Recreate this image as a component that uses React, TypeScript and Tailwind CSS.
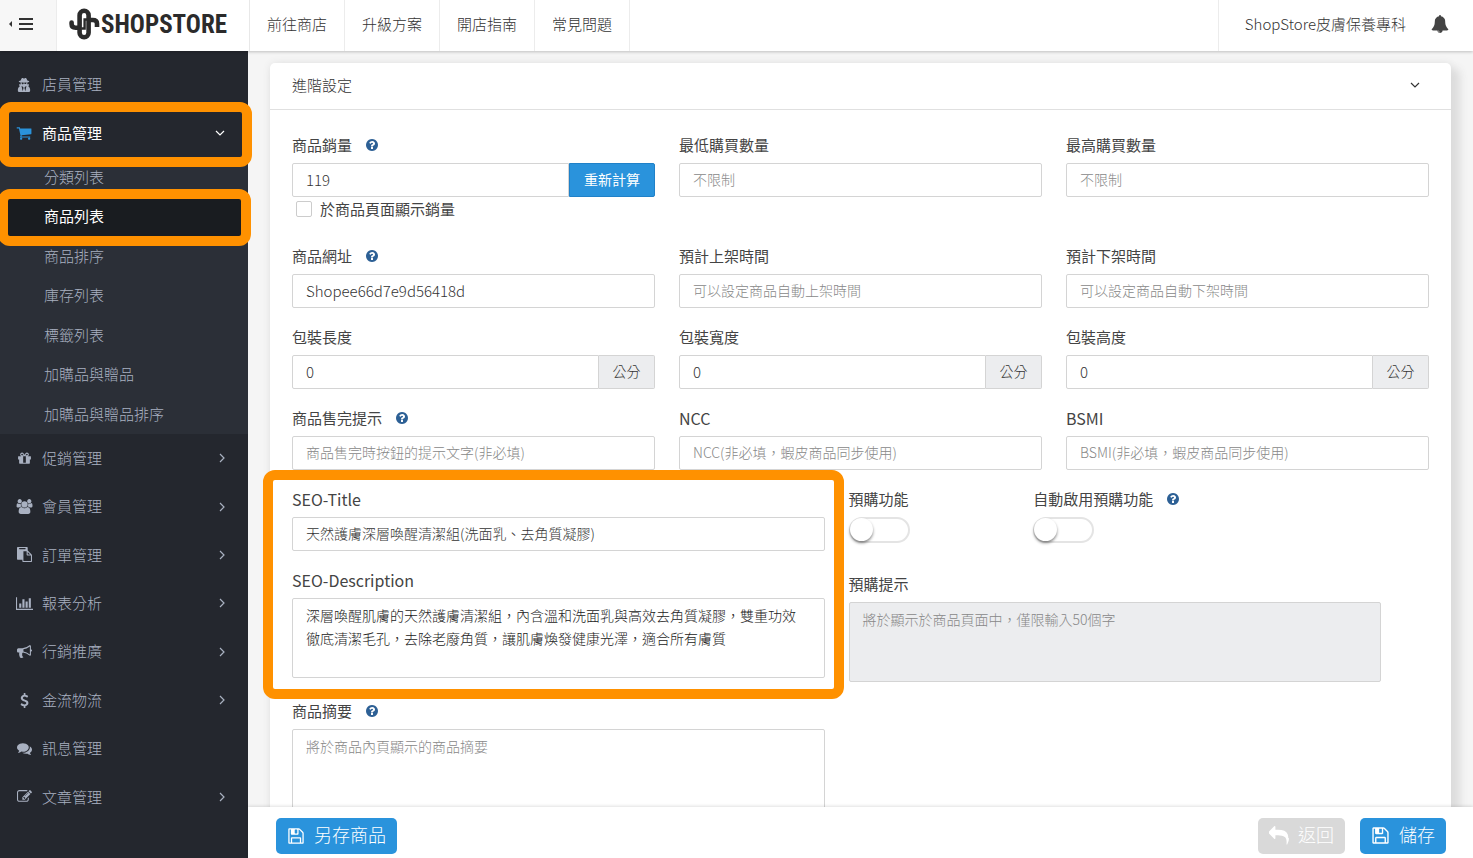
import React, { useId } from "react";
import { FaUserSecret } from "react-icons/fa";

type IconProps = { d: string; className?: string; wide?: boolean };

function Glyph({ d, className = "h-[14px] w-[14px]", wide = false }: IconProps) {
  return (
    <svg viewBox={wide ? "0 0 2048 1792" : "0 0 1792 1792"} fill="currentColor" aria-hidden="true" className={className}>
      <path d={d} />
    </svg>
  );
}

const icons = {
  cart: "M704 1536q0 52-38 90t-90 38-90-38-38-90 38-90 90-38 90 38 38 90zm896 0q0 52-38 90t-90 38-90-38-38-90 38-90 90-38 90 38 38 90zm128-1088v512q0 24-16.5 42.5t-40.5 21.5l-1044 122q13 60 13 70 0 16-24 64h920q26 0 45 19t19 45-19 45-45 19h-1024q-26 0-45-19t-19-45q0-11 8-31.5t16-36 21.5-40 15.5-29.5l-177-823h-204q-26 0-45-19t-19-45 19-45 45-19h256q16 0 28.5 6.5t19.5 15.5 13 24.5 8 26 5.5 29.5 4.5 26h1201q26 0 45 19t19 45z",
  gift: "M1056 1356v-716h-320v716q0 25 18 38.5t46 13.5h192q28 0 46-13.5t18-38.5zm-456-844h195l-126-161q-26-31-69-31-40 0-68 28t-28 68 28 68 68 28zm688-96q0-40-28-68t-68-28q-43 0-69 31l-125 161h194q40 0 68-28t28-68zm376 256v320q0 14-9 23t-23 9h-96v416q0 40-28 68t-68 28h-1088q-40 0-68-28t-28-68v-416h-96q-14 0-23-9t-9-23v-320q0-14 9-23t23-9h440q-93 0-158.5-65.5t-65.5-158.5 65.5-158.5 158.5-65.5q107 0 168 77l128 165 128-165q61-77 168-77 93 0 158.5 65.5t65.5 158.5-65.5 158.5-158.5 65.5h440q14 0 23 9t9 23z",
  users: "M657 896q-162 5-265 128h-134q-82 0-138-40.5t-56-118.5q0-353 124-353 6 0 43.5 21t97.5 42.5 119 21.5q67 0 133-23-5 37-5 66 0 159 90 287zm1071 637q0 120-73 189.5t-194 69.5h-874q-121 0-194-69.5t-73-189.5q0-53 3.5-103.5t14-109 26.5-108.5 43-97.5 62-81 85.5-53.5 111.5-20q10 0 43 21.5t73 48 107 48 135 21.5 135-21.5 107-48 73-48 43-21.5q61 0 111.5 20t85.5 53.5 62 81 43 97.5 26.5 108.5 14 109 3.5 103.5zm-1024-1277q0 106-75 181t-181 75-181-75-75-181 75-181 181-75 181 75 75 181zm704 384q0 159-112.5 271.5t-271.5 112.5-271.5-112.5-112.5-271.5 112.5-271.5 271.5-112.5 271.5 112.5 112.5 271.5zm576 225q0 78-56 118.5t-138 40.5h-134q-103-123-265-128 90-128 90-287 0-29-5-66 66 23 133 23 59 0 119-21.5t97.5-42.5 43.5-21q124 0 124 353zm-128-609q0 106-75 181t-181 75-181-75-75-181 75-181 181-75 181 75 75 181z",
  paste: "M768 1664h896v-640h-416q-40 0-68-28t-28-68v-416h-384v1152zm256-1440v-64q0-13-9.5-22.5t-22.5-9.5h-704q-13 0-22.5 9.5t-9.5 22.5v64q0 13 9.5 22.5t22.5 9.5h704q13 0 22.5-9.5t9.5-22.5zm256 672h299l-299-299v299zm512 128v672q0 40-28 68t-68 28h-960q-40 0-68-28t-28-68v-160h-544q-40 0-68-28t-28-68v-1344q0-40 28-68t68-28h1088q40 0 68 28t28 68v328q21 13 36 28l408 408q28 28 48 76t20 88z",
  chart: "M640 896v512h-256v-512h256zm384-512v1024h-256v-1024h256zm1024 1152v128h-2048v-1536h128v1408h1920zm-640-896v768h-256v-768h256zm384-384v1152h-256v-1152h256z",
  horn: "M1664 640q53 0 90.5 37.5t37.5 90.5-37.5 90.5-90.5 37.5v384q0 52-38 90t-90 38q-417-347-812-380-58 19-91 66t-31 100.5 40 92.5q-20 33-23 65.5t6 58 33.5 55 48 50 61.5 50.5q-29 58-111.5 83t-168.5 11.5-132-55.5q-7-23-29.5-87.5t-32-94.5-23-89-15-101 3.5-98.5 22-110.5h-122q-66 0-113-47t-47-113v-192q0-66 47-113t113-47h480q435 0 896-384 52 0 90 38t38 90v384zm-128 604v-954q-394 302-768 343v270q377 42 768 341z",
  dollar: "M1362 1185q0 153-99.5 263.5t-258.5 136.5v175q0 14-9 23t-23 9h-135q-13 0-22.5-9.5t-9.5-22.5v-175q-66-9-127.5-31t-101.5-44.5-74-48-46.5-37.5-17.5-18q-17-21-2-41l103-135q7-10 23-12 15-2 24 9l2 2q113 99 243 125 37 8 74 8 81 0 142.5-43t61.5-122q0-28-15-53t-33.5-42-58.5-37.5-66-32-80-32.5q-39-16-61.5-25t-61.5-26.5-62.5-31-56.5-35.5-53.5-42.5-43.5-49-35.5-58-21-66.5-8.5-78q0-138 98-242t255-134v-180q0-13 9.5-22.5t22.5-9.5h135q14 0 23 9t9 23v176q57 6 110.5 23t87 33.5 63.5 37.5 39 29 15 14q17 18 5 38l-81 146q-8 15-23 16-14 3-27-7-3-3-14.5-12t-39-26.5-58.5-32-74.5-26-85.5-11.5q-95 0-155 43t-60 111q0 26 8.5 48t29.5 41.5 39.5 33 56 31 60.5 27 70 27.5q53 20 81 31.5t76 35 75.5 42.5 62 50 53 63.5 31.5 76.5 13 94z",
  comments: "M1408 768q0 139-94 257t-256.5 186.5-353.5 68.5q-86 0-176-16-124 88-278 128-36 9-86 16h-3q-11 0-20.5-8t-11.5-21q-1-3-1-6.5t.5-6.5 2-6l2.5-5 3.5-5.5 4-5 4.5-5 4-4.5q5-6 23-25t26-29.5 22.5-29 25-38.5 20.5-44q-124-72-195-177t-71-224q0-139 94-257t256.5-186.5 353.5-68.5 353.5 68.5 256.5 186.5 94 257zm384 256q0 120-71 224.5t-195 176.5q10 24 20.5 44t25 38.5 22.5 29 26 29.5 23 25q1 1 4 4.5t4.5 5 4 5 3.5 5.5l2.5 5 2 6 .5 6.5-1 6.5q-3 14-13 22t-22 7q-50-7-86-16-154-40-278-128-90 16-176 16-271 0-472-132 58 4 88 4 161 0 309-45t264-129q125-92 192-212t67-254q0-77-23-152 129 71 204 178t75 230z",
  edit: "M888 1184l116-116-152-152-116 116v56h96v96h56zm440-720q-16-16-33 1l-350 350q-17 17-1 33t33-1l350-350q17-17 1-33zm80 594v190q0 119-84.5 203.5t-203.5 84.5h-832q-119 0-203.5-84.5t-84.5-203.5v-832q0-119 84.5-203.5t203.5-84.5h832q63 0 117 25 15 7 18 23 3 17-9 29l-49 49q-14 14-32 8-23-6-45-6h-832q-66 0-113 47t-47 113v832q0 66 47 113t113 47h832q66 0 113-47t47-113v-126q0-13 9-22l64-64q15-15 35-7t20 29zm-96-738l288 288-672 672h-288v-288zm444 132l-92 92-288-288 92-92q28-28 68-28t68 28l152 152q28 28 28 68t-28 68z",
  bell: "M912 1696q0-16-16-16-59 0-101.5-42.5t-42.5-101.5q0-16-16-16t-16 16q0 73 51.5 124.5t124.5 51.5q16 0 16-16zm816-288q0 52-38 90t-90 38h-448q0 106-75 181t-181 75-181-75-75-181h-448q-52 0-90-38t-38-90q50-42 91-88t85-119.5 74.5-158.5 50-206 19.5-260q0-152 117-282.5t307-158.5q-8-19-8-39 0-40 28-68t68-28 68 28 28 68q0 20-8 39 190 28 307 158.5t117 282.5q0 139 19.5 260t50 206 74.5 158.5 85 119.5 91 88z",
  help: "M1024 1376v-192q0-14-9-23t-23-9h-192q-14 0-23 9t-9 23v192q0 14 9 23t23 9h192q14 0 23-9t9-23zm256-672q0-88-55.5-163t-138.5-116-170-41q-243 0-371 213-15 24 8 42l132 100q7 6 19 6 16 0 25-12 53-68 86-92 34-24 86-24 48 0 85.5 26t37.5 59q0 38-20 61t-68 45q-63 28-115.5 86.5t-52.5 125.5v36q0 14 9 23t23 9h192q14 0 23-9t9-23q0-19 21.5-49.5t54.5-49.5q32-18 49-28.5t46-35 44.5-48 28-60.5 12.5-81zm384 192q0 209-103 385.5t-279.5 279.5-385.5 103-385.5-103-279.5-279.5-103-385.5 103-385.5 279.5-279.5 385.5-103 385.5 103 279.5 279.5 103 385.5z",
  save: "M512 1536h768v-384h-768v384zm896 0h128v-896q0-14-10-38.5t-20-34.5l-281-281q-10-10-34-20t-39-10v416q0 40-28 68t-68 28h-576q-40 0-68-28t-28-68v-416h-128v1280h128v-416q0-40 28-68t68-28h832q40 0 68 28t28 68v416zm-384-928v-320q0-13-9.5-22.5t-22.5-9.5h-192q-13 0-22.5 9.5t-9.5 22.5v320q0 13 9.5 22.5t22.5 9.5h192q13 0 22.5-9.5t9.5-22.5zm640 32v928q0 40-28 68t-68 28h-1344q-40 0-68-28t-28-68v-1344q0-40 28-68t68-28h928q40 0 88 20t76 48l280 280q28 28 48 76t20 88z",
  reply: "M1792 1120q0 166-127 451-3 7-10.5 24t-13.5 30-13 22q-12 17-28 17-15 0-23.5-10t-8.5-25q0-9 2.5-26.5t2.5-23.5q5-68 5-123 0-112-19.5-200.5t-54-153.5-89-112-117.5-78-145.5-45-167.5-21.5-188-6.5h-224v256q0 26-19 45t-45 19-45-19l-512-512q-19-19-19-45t19-45l512-512q19-19 45-19t45 19 19 45v256h224q713 0 875 403 53 134 53 333z",
};

function Angle({ down = false, className = "" }: { down?: boolean; className?: string }) {
  return (
    <svg viewBox="0 0 10 10" fill="none" stroke="currentColor" strokeWidth="1.2" aria-hidden="true" className={`h-[10px] w-[10px] ${className}`}>
      <path d={down ? "M1 3l4 4 4-4" : "M3 1l4 4-4 4"} />
    </svg>
  );
}

function Logo() {
  return (
    <a href="#home" className="flex h-full w-[193px] items-center gap-px border-r border-[#e8e8e8] pb-[3px] pl-[12px] text-[#2b2b2b]">
      <svg viewBox="0 0 31 32" fill="none" stroke="currentColor" className="h-[32px] w-[31px] shrink-0" aria-hidden="true">
        <path d="M2.6 14.5v1.6q0 3.6 4 3.6h3" strokeWidth="4.6" strokeLinecap="round" />
        <rect x="10.6" y="2.8" width="9" height="26.4" rx="4.5" strokeWidth="4.6" />
        <path d="M12.4 20.5h3.2v-9h4" strokeWidth="2.4" />
        <path d="M21 12h2.6q4.4 0 4.4 3.6v3.4" strokeWidth="4.6" />
      </svg>
      <span className="font-['Roboto_Condensed','Lato',sans-serif] text-[25px] leading-none font-bold">SHOPSTORE</span>
    </a>
  );
}

function TopBar() {
  return (
    <header className="relative z-20 flex h-[51px] shrink-0 items-stretch bg-white text-[15px] text-[#333] shadow-[0_1px_3px_rgba(0,0,0,0.22)]">
      <button type="button" aria-label="選單" className="flex w-[57px] items-center gap-[7px] border-r border-[#ececec] bg-[#f7f7f7] pb-[3px] pl-[9px] text-[#333]">
        <svg viewBox="0 0 3 6" className="h-[6px] w-[3px]" fill="currentColor" aria-hidden="true"><path d="M3 0v6L0 3z" /></svg>
        <svg viewBox="0 0 14 12" className="h-[12px] w-[14px]" fill="currentColor" aria-hidden="true"><path d="M0 0h14v2H0zM0 5h14v2H0zM0 10h14v2H0z" /></svg>
      </button>
      <Logo />
      <nav className="flex">
        {["前往商店", "升級方案", "開店指南", "常見問題"].map((t) => (
          <a key={t} href="#top" className="flex items-center border-r border-[#ececec] px-[17px] pb-[2px]">{t}</a>
        ))}
      </nav>
      <div className="ml-auto flex items-center gap-[25px] border-l border-[#ececec] pr-[24px] pb-[3px] pl-[26px]">
        <a href="#account">ShopStore皮膚保養專科</a>
        <button type="button" aria-label="通知" className="text-[#444]"><Glyph d={icons.bell} className="h-[18px] w-[18px]" /></button>
      </div>
    </header>
  );
}

type Item = { label: string; icon: React.ReactNode; arrow?: boolean };

const lowerItems: Item[] = [
  { label: "促銷管理", icon: <Glyph d={icons.gift} className="h-[15px] w-[15px]" />, arrow: true },
  { label: "會員管理", icon: <Glyph d={icons.users} wide className="h-[15px] w-[17px]" />, arrow: true },
  { label: "訂單管理", icon: <Glyph d={icons.paste} className="h-[15px] w-[15px]" />, arrow: true },
  { label: "報表分析", icon: <Glyph d={icons.chart} wide className="h-[15px] w-[17px]" />, arrow: true },
  { label: "行銷推廣", icon: <Glyph d={icons.horn} className="h-[15px] w-[15px]" />, arrow: true },
  { label: "金流物流", icon: <Glyph d={icons.dollar} className="h-[15px] w-[15px]" />, arrow: true },
  { label: "訊息管理", icon: <Glyph d={icons.comments} className="h-[15px] w-[15px]" /> },
  { label: "文章管理", icon: <Glyph d={icons.edit} className="h-[15px] w-[15px]" />, arrow: true },
];

const subItems = ["分類列表", "商品列表", "商品排序", "庫存列表", "標籤列表", "加購品與贈品", "加購品與贈品排序"];

function MenuLink({ label, icon, arrow }: Item) {
  return (
    <a href="#menu" className="flex h-full items-center pr-[21px] pl-[15px]">
      <span className="flex w-[18px] justify-center">{icon}</span>
      <span className="ml-[9px]">{label}</span>
      {arrow && <Angle className="ml-auto" />}
    </a>
  );
}

function Highlight({ className }: { className: string }) {
  return <span aria-hidden="true" className={`pointer-events-none absolute z-10 rounded-[12px] border-[10px] border-[#ff9100] ${className}`} />;
}

function Sidebar() {
  return (
    <aside className="relative z-10 w-[248px] shrink-0 bg-[#24272e] pt-[9px] text-[15px] text-[#a9b1c1]">
      <div className="h-[49px]">
        <MenuLink label="店員管理" icon={<FaUserSecret className="h-[14px] w-[14px]" />} />
      </div>
      <div className="relative h-[48px]">
        <a href="#products" className="flex h-full items-center pr-[23px] pl-[15px] font-normal text-white">
          <span className="flex w-[18px] justify-center text-[#2a93dc]"><Glyph d={icons.cart} className="h-[16px] w-[16px]" /></span>
          <span className="ml-[9px]">商品管理</span>
          <Angle down className="ml-auto" />
        </a>
        <Highlight className="-top-[7px] -right-[4px] -bottom-[10px] -left-px" />
      </div>
      <ul className="grid h-[277px] auto-rows-fr bg-[#2b2f37]">
        {subItems.map((t) => (
          <li key={t} className="relative">
            <a href="#sub" className={`flex h-full items-center pl-[44px] ${t === "商品列表" ? "bg-[#191c20] font-normal text-white" : ""}`}>{t}</a>
            {t === "商品列表" && <Highlight className="-top-[8px] -right-[3px] -bottom-[10px] -left-[2px]" />}
          </li>
        ))}
      </ul>
      <ul className="grid h-[387px] auto-rows-fr">
        {lowerItems.map((i) => (
          <li key={i.label}><MenuLink {...i} /></li>
        ))}
      </ul>
    </aside>
  );
}

const inputBox = "h-[34px] w-full min-w-0 border border-[#d4d4d4] bg-white px-[13px] pb-[2px] text-[#333] outline-none placeholder:text-[#888] placeholder:opacity-100";
const areaBox = "block h-[80px] w-full resize-none overflow-hidden rounded-[2px] border border-[#d4d4d4] py-[5px] pr-[18px] pl-[13px] text-[14px] leading-[23px] text-[#222] outline-none placeholder:text-[#888] placeholder:opacity-100";

function FieldLabel({ id, text, help }: { id: string; text: string; help?: boolean }) {
  const latin = /^[\x20-\x7e]+$/.test(text);
  return (
    <div className={`flex h-[34px] items-center gap-[13px] pb-[2px] font-normal text-[#444] ${latin ? "text-[16px]" : "text-[15px]"}`}>
      <label htmlFor={id}>{text}</label>
      {help && <Glyph d={icons.help} className="h-[14px] w-[14px] text-[#2d6095]" />}
    </div>
  );
}

type FieldProps = { label: string; help?: boolean; value?: string; placeholder?: string; addon?: React.ReactNode; latin?: boolean };

function Field({ label, help, value, placeholder, addon, latin }: FieldProps) {
  const id = useId();
  return (
    <div>
      <FieldLabel id={id} text={label} help={help} />
      <div className="flex">
        <input id={id} type="text" defaultValue={value} placeholder={placeholder} className={`${inputBox} ${latin ? "text-[15px]" : "text-[14px]"} ${addon ? "rounded-l-[2px]" : "rounded-[2px]"}`} />
        {addon}
      </div>
    </div>
  );
}

function Area({ label, help, value, placeholder, disabled }: FieldProps & { disabled?: boolean }) {
  const id = useId();
  return (
    <div>
      <FieldLabel id={id} text={label} help={help} />
      <textarea id={id} defaultValue={value} placeholder={placeholder} disabled={disabled} className={`${areaBox} ${disabled ? "bg-[#ecedef]" : "bg-white"}`} />
    </div>
  );
}

function Toggle({ label, help }: { label: string; help?: boolean }) {
  const id = useId();
  return (
    <div>
      <FieldLabel id={id} text={label} help={help} />
      <span className="relative block h-[26px] w-[61px] rounded-full border-2 border-[#e4e4e4] bg-white">
        <input id={id} type="checkbox" role="switch" className="peer absolute inset-0 z-10 cursor-pointer opacity-0" />
        <span className="absolute -top-px -left-px h-[23px] w-[23px] rounded-full bg-white shadow-[0_2px_3px_rgba(0,0,0,0.45)] peer-checked:left-[34px]" />
      </span>
    </div>
  );
}

const cm = <span className="flex w-[56px] shrink-0 items-center justify-center rounded-r-[2px] border border-l-0 border-[#d4d4d4] bg-[#ecedef] pb-[2px] text-[14px] text-[#333]">公分</span>;

function Settings() {
  return (
    <section className="mx-[22px] mt-[12px] rounded-[5px] bg-white shadow-[7px_7px_8px_2px_#dcdcdc,0_0_8px_rgba(0,0,0,0.08)]">
      <header className="flex h-[47px] items-center justify-between border-b border-[#e0e0e0] pr-[31px] pb-[2px] pl-[22px]">
        <h2 className="text-[15px] text-[#333]">進階設定</h2>
        <button type="button" aria-label="收合" className="text-[#333]"><Angle down /></button>
      </header>
      <div className="flex flex-col gap-[13px] px-[22px] pt-[19px] pb-[22px]">
        <div className="grid grid-cols-3 gap-x-6">
          <div>
            <Field
              label="商品銷量"
              help
              value="119"
              latin
              addon={<button type="button" className="w-[86px] shrink-0 rounded-r-[2px] border border-[#2081c8] bg-[#2a93dc] pb-[2px] text-[14px] font-normal text-white">重新計算</button>}
            />
            <label className="mb-1 flex h-[26px] items-center gap-2 pb-[2px] pl-1 text-[15px] font-normal text-[#444]">
              <input type="checkbox" className="h-4 w-4 appearance-none rounded-[2px] border border-[#ccc] bg-white checked:bg-[#2a93dc]" />
              於商品頁面顯示銷量
            </label>
          </div>
          <Field label="最低購買數量" placeholder="不限制" />
          <Field label="最高購買數量" placeholder="不限制" />
        </div>
        <div className="grid grid-cols-3 gap-x-6 gap-y-[13px]">
          <Field label="商品網址" help value="Shopee66d7e9d56418d" latin />
          <Field label="預計上架時間" placeholder="可以設定商品自動上架時間" />
          <Field label="預計下架時間" placeholder="可以設定商品自動下架時間" />
          <Field label="包裝長度" value="0" latin addon={cm} />
          <Field label="包裝寬度" value="0" latin addon={cm} />
          <Field label="包裝高度" value="0" latin addon={cm} />
          <Field label="商品售完提示" help placeholder="商品售完時按鈕的提示文字(非必填)" />
          <Field label="NCC" placeholder="NCC(非必填，蝦皮商品同步使用)" />
          <Field label="BSMI" placeholder="BSMI(非必填，蝦皮商品同步使用)" />
        </div>
        <div className="grid grid-cols-2 items-start gap-x-6 pr-12">
          <div>
            <div className="relative flex flex-col gap-[13px]">
              <Field label="SEO-Title" value="天然護膚深層喚醒清潔組(洗面乳、去角質凝膠)" />
              <Area label="SEO-Description" value="深層喚醒肌膚的天然護膚清潔組，內含溫和洗面乳與高效去角質凝膠，雙重功效徹底清潔毛孔，去除老廢角質，讓肌膚煥發健康光澤，適合所有膚質" />
              <Highlight className="-top-[13px] -right-[19px] -bottom-[21px] -left-[29px]" />
            </div>
            <div className="mt-[17px]">
              <Area label="商品摘要" help placeholder="將於商品內頁顯示的商品摘要" />
            </div>
          </div>
          <div className="flex flex-col gap-[25px]">
            <div className="grid grid-cols-[185fr_348fr]">
              <Toggle label="預購功能" />
              <Toggle label="自動啟用預購功能" help />
            </div>
            <Area label="預購提示" disabled placeholder="將於顯示於商品頁面中，僅限輸入50個字" />
          </div>
        </div>
      </div>
    </section>
  );
}

function ActionBar() {
  const base = "flex h-9 items-center gap-[9px] rounded-[5px] px-[11px] text-[18px] text-white";
  return (
    <footer className="relative z-20 flex h-[51px] shrink-0 items-center gap-[15px] bg-white pt-[6px] pr-[27px] pl-[28px] shadow-[0_-1px_3px_rgba(0,0,0,0.12)]">
      <button type="button" className={`${base} mr-auto bg-[#2a93dc]`}>
        <Glyph d={icons.save} className="h-[18px] w-[18px]" />
        <span className="pb-[2px]">另存商品</span>
      </button>
      <button type="button" className={`${base} bg-[#d9d9d9]`}>
        <Glyph d={icons.reply} className="h-[20px] w-[20px]" />
        <span className="pb-[2px]">返回</span>
      </button>
      <button type="button" className={`${base} bg-[#2a93dc]`}>
        <Glyph d={icons.save} className="h-[19px] w-[19px]" />
        <span className="pb-[2px]">儲存</span>
      </button>
    </footer>
  );
}

export default function App() {
  return (
    <div className="flex h-screen flex-col overflow-hidden bg-[#f5f5f5] font-['Noto_Sans_CJK_TC','Noto_Sans',sans-serif] font-light">
      <TopBar />
      <div className="flex min-h-0 flex-1">
        <Sidebar />
        <div className="flex min-w-0 flex-1 flex-col">
          <main className="min-h-0 flex-1 overflow-hidden">
            <Settings />
          </main>
          <ActionBar />
        </div>
      </div>
    </div>
  );
}
